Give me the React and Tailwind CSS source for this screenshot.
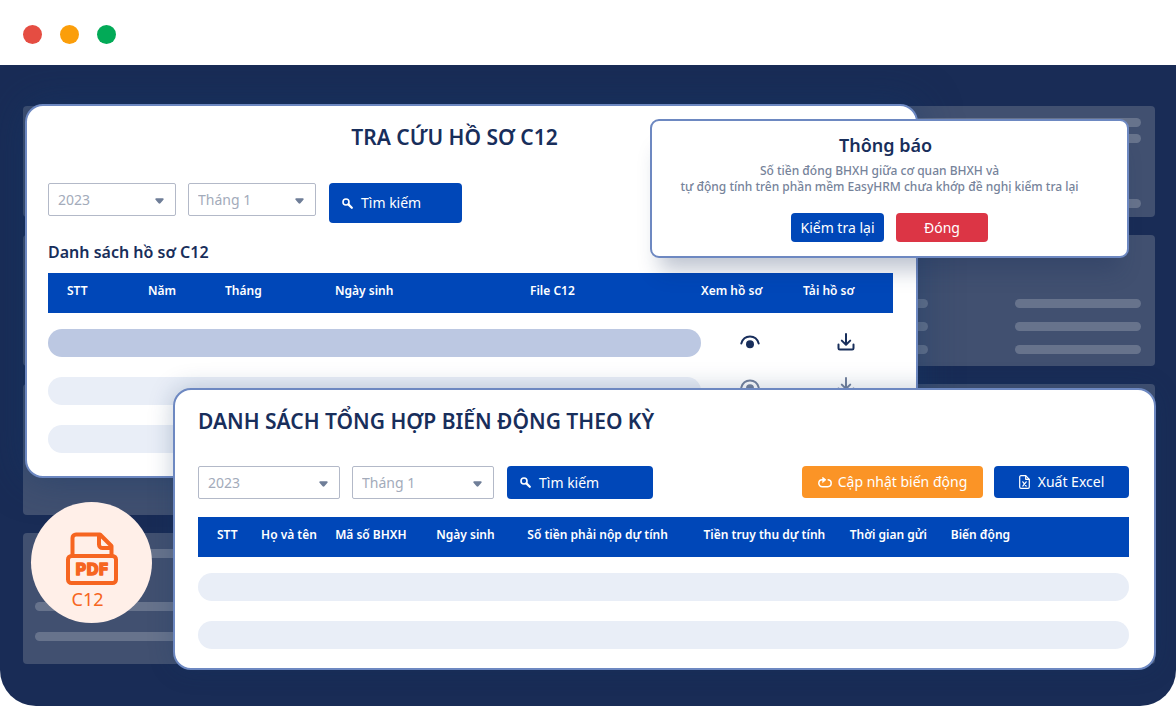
import clsx from 'clsx'

const BAR = 'h-[9px] rounded-full bg-white/20'
const BLUE = 'bg-[#0047b8]'

const FILE_COLUMNS = [
  { label: 'STT', width: 'w-[100px]' },
  { label: 'Năm', width: 'w-[77px]' },
  { label: 'Tháng', width: 'w-[110px]' },
  { label: 'Ngày sinh', width: 'w-[195px]' },
  { label: 'File C12', width: 'w-[171px]' },
  { label: 'Xem hồ sơ', width: 'w-[102px]' },
  { label: 'Tải hồ sơ', width: 'w-[90px]' },
]

const CHANGE_COLUMNS = [
  { label: 'STT', width: 'w-[63px]' },
  { label: 'Họ và tên', width: 'w-[74px]' },
  { label: 'Mã số BHXH', width: 'w-[101px]' },
  { label: 'Ngày sinh', width: 'w-[91px]' },
  { label: 'Số tiền phải nộp dự tính', width: 'w-[176px]' },
  { label: 'Tiền truy thu dự tính', width: 'w-[146px]' },
  { label: 'Thời gian gửi', width: 'w-[101px]' },
  { label: 'Biến động', width: 'w-[178px]' },
]

export default function App() {
  return (
    <div className="bg-white font-['Noto_Sans','Open_Sans',sans-serif] text-[#182e5b]">
      <header className="flex h-[65px] items-center gap-[18px] px-[23px] pt-1">
        <span className="size-[19px] rounded-full bg-[#e54d42]" />
        <span className="size-[19px] rounded-full bg-[#fb9e0a]" />
        <span className="size-[19px] rounded-full bg-[#02aa57]" />
      </header>

      <main className="relative overflow-hidden rounded-b-[36px] bg-[#192c56] pt-[41px] pr-[21px] pb-[42px] pl-[23px] text-sm">
        <Backdrop />
        <FilePanel />
        <NoticeDialog />
        <ChangePanel />
        <PdfBadge />
      </main>
    </div>
  )
}

// Faded cards behind the windows
function Backdrop() {
  return (
    <div className="flex flex-col gap-[18px]" aria-hidden="true">
      <BackdropCard className="pt-3 pb-[9px]">
        <div className={BAR} />
        <div className={clsx(BAR, 'mt-[7px] mb-auto')} />
        <div className={BAR} />
      </BackdropCard>
      <BackdropCard className="justify-end gap-[14px] pb-3">
        {[0, 1, 2].map((i) => (
          <div key={i} className="flex gap-[87px]">
            <div className={clsx(BAR, 'flex-1')} />
            <div className={clsx(BAR, 'w-[126px]')} />
          </div>
        ))}
      </BackdropCard>
      <BackdropCard />
      <BackdropCard className="pt-4 pb-[23px]">
        <div className={clsx(BAR, 'mb-auto')} />
        <div className={clsx(BAR, 'mb-[21px]')} />
        <div className={BAR} />
      </BackdropCard>
    </div>
  )
}

function BackdropCard({ className, children }) {
  return (
    <div
      className={clsx(
        'flex min-h-[131px] flex-col rounded bg-[#415070] pr-[14px] pl-3 first:min-h-[111px]',
        className,
      )}
    >
      {children}
    </div>
  )
}

function FilePanel() {
  return (
    <section className="absolute top-[39px] right-[258px] left-[25px] h-[374px] rounded-[18px] border-2 border-[#6d88c1] bg-white pt-4 pr-[23px] pl-[21px] shadow-[0_0_40px_rgba(20,56,104,0.5)]">
      <h1 className="pr-8 text-center text-[21px] leading-[30px] font-semibold">TRA CỨU HỒ SƠ C12</h1>
      <div className="mt-[31px] flex items-start gap-3">
        <Select label="Năm hồ sơ" value="2023" className="w-[128px]" />
        <Select label="Tháng hồ sơ" value="Tháng 1" className="w-[128px]" />
        <SearchButton className="h-10 w-[133px]" />
      </div>
      <h2 className="mt-[17px] mb-[9px] text-base leading-6 font-semibold">Danh sách hồ sơ C12</h2>
      <table className="w-full table-fixed border-collapse">
        <TableHead columns={FILE_COLUMNS} />
        <tbody>
          <FileRow active />
          <FileRow />
          <tr>
            <td colSpan={5} className="pt-4 pb-1">
              <div className="h-7 rounded-full bg-[#e9eef7]" />
            </td>
            <td colSpan={2} />
          </tr>
        </tbody>
      </table>
    </section>
  )
}

function FileRow({ active }) {
  const cell = clsx('pr-1 text-center', active && 'pt-2')

  return (
    <tr className={clsx(!active && 'text-[#182e5b]/60')}>
      <td colSpan={5} className="pt-4 pb-1">
        <div className={clsx('h-7 rounded-full', active ? 'bg-[#bcc8e2]' : 'bg-[#e9eef7]')} />
      </td>
      <td className={cell}>
        <button type="button" aria-label="Xem hồ sơ" className="align-middle">
          <EyeIcon />
        </button>
      </td>
      <td className={cell}>
        <button type="button" aria-label="Tải hồ sơ" className="align-middle">
          <DownloadIcon />
        </button>
      </td>
    </tr>
  )
}

function NoticeDialog() {
  return (
    <section
      role="dialog"
      aria-labelledby="notice-title"
      className="absolute top-[54px] right-[47px] w-[479px] rounded-[9px] border-2 border-[#6d88c1] bg-white px-4 pt-2 pb-[14px] text-center shadow-[0_22px_20px_-10px_rgba(24,46,91,0.28)]"
    >
      <h2 id="notice-title" className="pr-2 text-lg leading-8 font-semibold">
        Thông báo
      </h2>
      <p className="mt-[2px] pr-5 text-xs leading-4 font-medium text-[#76839a]">
        Số tiền đóng BHXH giữa cơ quan BHXH và
        <br />
        tự động tính trên phần mềm EasyHRM chưa khớp đề nghị kiểm tra lại
      </p>
      <div className="mt-[18px] flex justify-center gap-3 text-white">
        <button type="button" className={clsx('h-[29px] w-[93px] rounded', BLUE)}>
          Kiểm tra lại
        </button>
        <button type="button" className="h-[29px] w-[92px] rounded bg-[#dc3545]">
          Đóng
        </button>
      </div>
    </section>
  )
}

function ChangePanel() {
  return (
    <section className="absolute top-[323px] right-5 left-[173px] h-[282px] rounded-[18px] border-2 border-[#6d88c1] bg-white pt-4 pr-[25px] pl-[23px] shadow-[0_0_24px_rgba(20,56,104,0.25)]">
      <h2 className="text-[21px] leading-[30px] font-semibold">DANH SÁCH TỔNG HỢP BIẾN ĐỘNG THEO KỲ</h2>
      <div className="mt-[30px] flex items-start gap-3">
        <Select label="Năm biến động" value="2023" className="w-[142px]" />
        <Select label="Tháng biến động" value="Tháng 1" className="w-[142px]" />
        <SearchButton className="h-[33px] w-[146px]" />
        <div className="ml-auto flex gap-[11px] text-white">
          <button
            type="button"
            className="flex h-8 w-[181px] items-center justify-center gap-[6px] rounded bg-[#fb9426]"
          >
            <RefreshIcon />
            Cập nhật biến động
          </button>
          <button
            type="button"
            className={clsx('flex h-8 w-[135px] items-center justify-center gap-2 rounded', BLUE)}
          >
            <ExcelIcon />
            Xuất Excel
          </button>
        </div>
      </div>
      <table className="mt-[18px] w-full table-fixed border-collapse">
        <TableHead columns={CHANGE_COLUMNS} />
        <tbody>
          {[0, 1].map((row) => (
            <tr key={row}>
              <td colSpan={CHANGE_COLUMNS.length} className="pt-4 pb-1">
                <div className="h-7 rounded-full bg-[#e9eef7]" />
              </td>
            </tr>
          ))}
        </tbody>
      </table>
    </section>
  )
}

function TableHead({ columns }) {
  return (
    <thead className={clsx('text-left text-xs text-white', BLUE)}>
      <tr>
        {columns.map((col) => (
          <th
            key={col.label}
            className={clsx('h-10 pb-1 font-semibold whitespace-nowrap first:pl-[19px]', col.width)}
          >
            {col.label}
          </th>
        ))}
      </tr>
    </thead>
  )
}

function Select({ label, value, className }) {
  return (
    <div className={clsx('relative', className)}>
      <select
        aria-label={label}
        defaultValue={value}
        className="h-[33px] w-full appearance-none rounded-xs border border-[#b3b9c8] bg-white pr-7 pl-[9px] text-sm text-[#a3abba]"
      >
        <option>{value}</option>
      </select>
      <svg
        className="pointer-events-none absolute top-[15px] right-3 h-[6px] w-[9px] text-[#6f7e98]"
        viewBox="0 0 10 6"
        fill="currentColor"
      >
        <path d="M1.3 0h7.4c.9 0 1.3.9.7 1.5L6 5.5c-.5.6-1.5.6-2 0L.6 1.5C0 .9.4 0 1.3 0z" />
      </svg>
    </div>
  )
}

function SearchButton({ className }) {
  return (
    <button
      type="button"
      className={clsx('ml-px flex items-center gap-2 rounded px-[13px] text-white', BLUE, className)}
    >
      <svg className="size-[11px]" viewBox="0 0 11 11" fill="none" stroke="currentColor">
        <circle cx="4" cy="4" r="3" strokeWidth="1.6" />
        <path d="M6.4 6.4l3.4 3.4" strokeWidth="2.2" strokeLinecap="round" />
      </svg>
      Tìm kiếm
    </button>
  )
}

function PdfBadge() {
  return (
    <div className="absolute top-[437px] left-[31px] flex size-[121px] flex-col items-center rounded-full bg-[#ffefe8] pt-[30px] text-[#f66520]">
      <svg className="h-[53px] w-[52px]" viewBox="0 0 52 53" fill="none" stroke="currentColor">
        <g strokeWidth="4" strokeLinejoin="round">
          <path d="M6.5 24V6A3.5 3.5 0 0 1 10 2.500h24L45.500 14v10" />
          <path d="M33 3.500v9a3.500 3.500 0 0 0 3.500 3.500H45" />
          <rect x="2" y="24" width="48" height="27" rx="3.500" />
        </g>
        <text
          x="26"
          y="43"
          textAnchor="middle"
          className="fill-current font-['DejaVu_Sans',sans-serif] text-[15px] font-bold"
          strokeWidth="1.300"
          strokeLinejoin="round"
        >
          PDF
        </text>
      </svg>
      <span className="pr-2 text-lg leading-7">C12</span>
    </div>
  )
}

function EyeIcon() {
  return (
    <svg className="h-[14px] w-5" viewBox="0 0 20 14" fill="none" stroke="currentColor">
      <path d="M1.3 8.5C2.500 4.200 6 1.500 10 1.500s7.500 2.700 8.700 7" strokeWidth="2" strokeLinecap="round" />
      <circle cx="10" cy="9.300" r="4" fill="currentColor" stroke="none" />
    </svg>
  )
}

function DownloadIcon() {
  return (
    <svg
      className="size-[18px]"
      viewBox="0 0 18 18"
      fill="none"
      stroke="currentColor"
      strokeWidth="2"
      strokeLinecap="round"
      strokeLinejoin="round"
    >
      <path d="M9 1v10.500M4.800 7.600L9 11.700l4.200-4.100" />
      <path d="M1.500 11.500v3.700c0 .8.600 1.300 1.300 1.300h12.400c.7 0 1.300-.5 1.300-1.300v-3.700" />
    </svg>
  )
}

function RefreshIcon() {
  return (
    <svg
      className="h-[11px] w-[14px]"
      viewBox="0 0 14 11"
      fill="none"
      stroke="currentColor"
      strokeWidth="1.500"
      strokeLinecap="round"
    >
      <path d="M10.200 2.800c1.700.2 3 1.600 3 3.300 0 2-1.500 3.600-3.500 3.600H4.300C2.300 9.700.8 8.200.8 6.300c0-2 1.500-3.500 3.500-3.500h1.500" />
      <path d="M4.800.3L8 2.800 4.800 5.400z" fill="currentColor" strokeWidth=".6" />
    </svg>
  )
}

function ExcelIcon() {
  return (
    <svg
      className="h-[14px] w-[11px]"
      viewBox="0 0 11 14"
      fill="none"
      stroke="currentColor"
      strokeWidth="1.2"
      strokeLinecap="round"
      strokeLinejoin="round"
    >
      <path d="M6.700.7H2C1.200.7.7 1.200.7 2v10c0 .8.500 1.300 1.300 1.300h7c.8 0 1.300-.5 1.300-1.300V4.500z" />
      <path d="M6.700.9v3.400h3.400" />
      <path d="M3.800 6.800l3.400 4.300M7.200 6.800l-3.400 4.300" />
    </svg>
  )
}
